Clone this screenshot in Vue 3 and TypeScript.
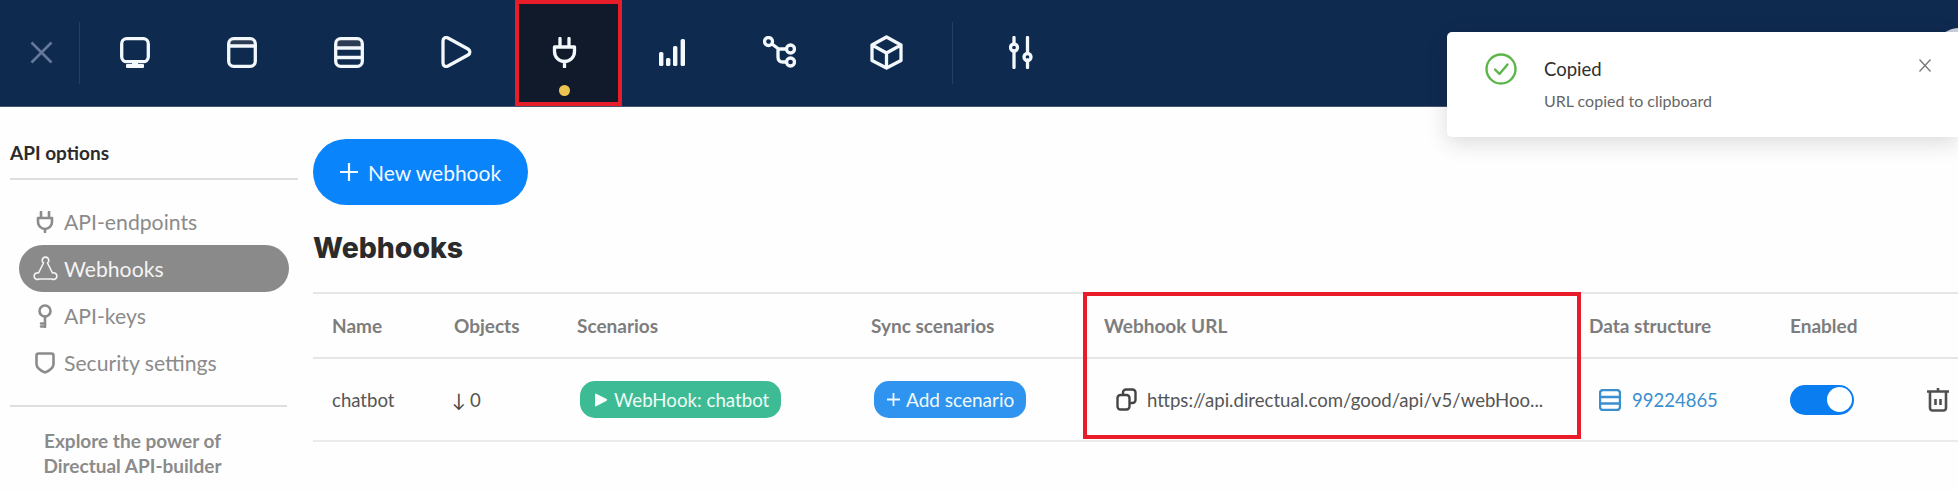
<script setup lang="ts">
const columns: string[] = ['Name', 'Objects', 'Scenarios', 'Sync scenarios', 'Webhook URL', 'Data structure', 'Enabled', '']
</script>

<template>
  <div class="page">
    <header class="topbar">
      <button class="close-btn" aria-label="Close">
        <svg width="23" height="23" viewBox="0 0 23 23"><path d="M1.500 1.500l20 20M21.500 1.500l-20 20" /></svg>
      </button>
      <nav class="tools">
        <div class="tool">
          <svg width="30" height="31" viewBox="0 0 30 31"><rect x="1.700" y="1.700" width="26.600" height="23" rx="5" /><rect class="solid" x="6" y="27" width="18" height="4" rx="1" /><rect class="solid" x="12" y="24" width="6" height="4" /></svg>
        </div>
        <div class="tool">
          <svg width="30" height="31" viewBox="0 0 30 31"><path class="band" d="M2 9V6a4 4 0 0 1 4-4h18a4 4 0 0 1 4 4v3z" /><rect x="1.700" y="1.700" width="26.600" height="27.600" rx="5" /><path d="M2 9h26" /></svg>
        </div>
        <div class="tool">
          <svg width="30" height="31" viewBox="0 0 30 31"><path class="band" d="M2 11V6a4 4 0 0 1 4-4h18a4 4 0 0 1 4 4v5z" /><rect x="1.700" y="1.700" width="26.600" height="27.600" rx="5" /><path d="M2 11h26M2 20.500h26" /></svg>
        </div>
        <div class="tool">
          <svg width="31" height="32" viewBox="0 0 31 32"><path d="M2 5c0-3 2.500-4.200 5-3l20 11c2.500 1.500 2.500 4.500 0 6L7 30c-2.500 1.200-5 0-5-3z" /></svg>
        </div>
        <div class="tool active">
          <svg width="25" height="31" viewBox="0 0 25 31"><path d="M8 1.500V10M17 1.500V10M2.500 10h20v4.500a10 10 0 0 1-20 0zM12.500 24.500V30" /></svg>
          <span class="dot"></span>
        </div>
        <div class="tool">
          <svg width="26" height="27" viewBox="0 0 26 27"><rect class="solid" x="0" y="13" width="4.400" height="14" rx="1.500" /><rect class="solid" x="7" y="19" width="4.400" height="8" rx="1.500" /><rect class="solid" x="14" y="7" width="4.400" height="20" rx="1.500" /><rect class="solid" x="21.600" y="0" width="4.400" height="27" rx="1.500" /></svg>
        </div>
        <div class="tool">
          <svg width="33" height="32" viewBox="0 0 33 32"><circle cx="5.500" cy="5.500" r="4" /><circle cx="27.500" cy="13" r="4" /><circle cx="27.500" cy="26" r="4" /><path d="M9 8l6 4.500V21q0 5 5 5h3.500M15 13h8.500" /></svg>
        </div>
        <div class="tool">
          <svg width="33" height="35" viewBox="0 0 33 35"><path d="M16.500 2L31 10v15.500L16.500 33 2 25.500V10zM2 10l14.500 8L31 10M16.500 18v15" /></svg>
        </div>
        <span class="separator"></span>
        <div class="tool tool-settings">
          <svg width="24" height="33" viewBox="0 0 24 33"><path d="M5 1.500v6.500M5 15v16.500M18.500 1.500V17M18.500 24v7.500" /><circle cx="5" cy="11.500" r="3.500" /><circle cx="18.500" cy="21" r="3.500" /></svg>
        </div>
      </nav>
    </header>

    <div class="content">
      <aside class="sidebar">
        <h3 class="side-title">API options</h3>
        <ul class="side-menu">
          <li class="side-item">
            <span class="side-icon"><svg width="18" height="22" viewBox="0 0 18 22"><path d="M5 1v6M13 1v6M2 7h14v4a7 7 0 0 1-14 0zM9 18v3" /></svg></span>
            API-endpoints
          </li>
          <li class="side-item current">
            <span class="side-icon"><svg width="27" height="27" viewBox="0 0 27 27"><path d="M11.500 8a3.300 3.300 0 1 1 4 0L20.500 18a3.300 3.300 0 1 1-.5 6H7a3.300 3.300 0 1 1-.5-6z" /></svg></span>
            Webhooks
          </li>
          <li class="side-item">
            <span class="side-icon"><svg width="16" height="24" viewBox="0 0 16 24"><circle cx="8" cy="7" r="5.500" /><path d="M8 12.500V23M4 19.500h4M4 22.500h4" /></svg></span>
            API-keys
          </li>
          <li class="side-item">
            <span class="side-icon"><svg width="20" height="22" viewBox="0 0 20 22"><path d="M1.500 3.500q0-2 2-2h13q2 0 2 2V12c0 5-5 7-8.500 8.500C6.500 19 1.500 17 1.500 12z" /></svg></span>
            Security settings
          </li>
        </ul>
        <p class="side-note">Explore the power of<br />Directual API-builder</p>
      </aside>

      <main class="main">
        <button class="new-btn">
          <svg width="18" height="18" viewBox="0 0 18 18"><path d="M9 0v18M0 9h18" /></svg>
          New webhook
        </button>
        <h2 class="heading">Webhooks</h2>

        <section class="table">
          <div class="table-row head">
            <div v-for="c in columns" :key="c" class="cell">{{ c }}</div>
          </div>
          <div class="table-row body-row">
            <div class="cell">chatbot</div>
            <div class="cell objects"><span class="arrow">↓</span>0</div>
            <div class="cell">
              <span class="chip green">
                <svg width="14" height="14" viewBox="0 0 14 14"><path d="M1 1.500q0-1.300 1.200-.8l10.500 5.300q1 .8 0 1.800L2.200 13.300Q1 13.800 1 12.500z" /></svg>
                WebHook: chatbot
              </span>
            </div>
            <div class="cell">
              <span class="chip blue">
                <svg width="13" height="13" viewBox="0 0 13 13"><path d="M6.500 0v13M0 6.500h13" /></svg>
                Add scenario
              </span>
            </div>
            <div class="cell url-cell">
              <svg width="21" height="23" viewBox="0 0 21 23"><rect x="1.500" y="7" width="12" height="14.500" rx="3" /><path d="M7 7V4.500a3 3 0 0 1 3-3h6.500a3 3 0 0 1 3 3V12a3 3 0 0 1-3 3h-3" /></svg>
              <span>https://api.directual.com/good/api/v5/webHoo...</span>
            </div>
            <div class="cell data-cell">
              <svg width="22" height="22" viewBox="0 0 22 22"><rect x="1" y="1" width="20" height="20" rx="3" /><path d="M1 8h20M1 14.500h20" /></svg>
              <span>99224865</span>
            </div>
            <div class="cell">
              <span class="toggle"><span class="knob"></span></span>
            </div>
            <div class="cell trash-cell">
              <svg width="22" height="25" viewBox="0 0 22 25"><path d="M0 4.500h22M11 1v3M3 5v16a2.500 2.500 0 0 0 2.500 2.500h11A2.500 2.500 0 0 0 19 21V5M8.500 12v6M13.500 12v6" /></svg>
            </div>
          </div>
          <div class="url-highlight"></div>
        </section>
      </main>
    </div>

    <span class="avatar-peek"></span>
    <aside class="toast">
      <svg class="toast-check" width="32" height="32" viewBox="0 0 32 32"><circle cx="16" cy="16" r="14.500" /><path d="M10 16.500l4.500 4.500 8-9.500" /></svg>
      <div class="toast-text">
        <div class="toast-title">Copied</div>
        <div class="toast-sub">URL copied to clipboard</div>
      </div>
      <svg class="toast-close" width="12" height="13" viewBox="0 0 12 13"><path d="M.5.500l11 12M11.500.500l-11 12" /></svg>
    </aside>
  </div>
</template>

<style scoped>
.page {
  position: relative;
  width: 1958px;
  height: 491px;
  overflow: hidden;
  background: #fefefe;
  font-family: Lato, "Open Sans", sans-serif;
}

/* top bar */
.topbar {
  display: flex;
  height: 107px;
  box-sizing: border-box;
  background: #0f2a4f;
  border-bottom: 1px solid #46566e;
}
.close-btn {
  width: 80px;
  padding: 0 0 2px 2px;
  border: 0;
  background: none;
  display: flex;
  align-items: center;
  justify-content: center;
}
.close-btn svg {
  fill: none;
  stroke: #64789a;
  stroke-width: 2.600;
}
.tools {
  position: relative;
  display: flex;
  flex: 1;
  border-left: 1px solid transparent;
}
.tools::before {
  content: "";
  position: absolute;
  left: -2px;
  top: 22px;
  height: 62px;
  width: 1px;
  background: #25405f;
}
.tool {
  position: relative;
  width: 107.400px;
  flex: none;
  display: flex;
  align-items: center;
  justify-content: center;
  padding-bottom: 2px;
  box-sizing: border-box;
}
.tool svg {
  fill: none;
  stroke: #f3f8fc;
  stroke-width: 3.300;
  stroke-linecap: round;
  stroke-linejoin: round;
}
.tool svg .solid {
  fill: #f3f8fc;
  stroke: none;
}
.tool svg .band {
  fill: #2c3c55;
  stroke: none;
}
.tool.active {
  background: #101a2b;
  border: 4px solid #e91d2a;
  margin: 0 -4px 0 4px;
  padding-right: 8px;
}
.dot {
  position: absolute;
  left: 50%;
  bottom: 6px;
  width: 11px;
  height: 11px;
  margin-left: -9.500px;
  border-radius: 50%;
  background: #edc451;
}
.separator {
  width: 1px;
  height: 62px;
  margin: 22px 0 0 12px;
  background: #25405f;
  flex: none;
}
.tool-settings {
  width: 135px;
}

/* body */
.content {
  display: flex;
}
.sidebar {
  width: 313px;
  flex: none;
  padding: 33px 0 0 10px;
  box-sizing: border-box;
}
.side-title {
  margin: 0;
  padding-bottom: 13px;
  width: 288px;
  font-size: 19px;
  line-height: 25px;
  font-weight: 700;
  color: #2b2b2b;
  border-bottom: 2px solid #dedede;
}
.side-menu {
  list-style: none;
  margin: 0;
  padding: 18px 0 19px;
  width: 277px;
  border-bottom: 2px solid #dedede;
}
.side-item {
  display: flex;
  align-items: center;
  width: 270px;
  height: 47px;
  margin-left: 9px;
  border-radius: 24px;
  font-size: 21.200px;
  color: #8b8b8b;
  box-sizing: border-box;
}
.side-item.current {
  background: #8a8a8a;
  color: #f4f4f4;
}
.side-icon {
  width: 45px;
  flex: none;
  display: flex;
  justify-content: center;
  padding-left: 7px;
  box-sizing: border-box;
}
.side-icon svg {
  fill: none;
  stroke: #8b8b8b;
  stroke-width: 2.600;
  stroke-linecap: round;
  stroke-linejoin: round;
}
.current .side-icon svg {
  stroke: #f4f4f4;
  stroke-width: 1.600;
}
.side-note {
  margin: 21px 0 0;
  width: 245px;
  text-align: center;
  font-size: 19px;
  line-height: 25px;
  font-weight: 700;
  color: #8b8b8b;
}

.main {
  flex: 1;
  min-width: 0;
  padding-top: 32px;
}
.new-btn {
  display: flex;
  align-items: center;
  gap: 10px;
  height: 66px;
  width: 215px;
  padding: 0 0 0 27px;
  border: 0;
  border-radius: 33px;
  background: #0a84fb;
  color: #f2f9ff;
  font-family: inherit;
  font-size: 21px;
}
.new-btn svg {
  fill: none;
  stroke: #f2f9ff;
  stroke-width: 2.200;
}
.heading {
  margin: 26px 0 27px;
  height: 34px;
  line-height: 34px;
  font-family: Inter, "Open Sans", sans-serif;
  font-size: 28.400px;
  font-weight: 800;
  color: #2b2b2b;
}

/* table */
.table {
  position: relative;
  border-top: 2px solid #e6e6e6;
}
.table-row {
  display: grid;
  grid-template-columns: 122px 123px 294px 233px 485px 201px 129px 1fr;
  align-items: center;
}
.head {
  height: 65px;
  border-bottom: 2px solid #e6e6e6;
  box-sizing: border-box;
  font-size: 19px;
  font-weight: 700;
  color: #7d7d7d;
}
.body-row {
  height: 83px;
  border-bottom: 2px solid #ebebeb;
  box-sizing: border-box;
  font-size: 18.600px;
  color: #555;
}
.cell {
  padding-left: 19px;
  white-space: nowrap;
}
.objects {
  padding-left: 17px;
}
.arrow {
  margin-right: 4px;
  color: #444;
}
.chip {
  display: inline-flex;
  align-items: center;
  height: 37px;
  margin-left: 3px;
  border-radius: 15px;
  color: #f0fbf7;
  box-sizing: border-box;
}
.chip.green {
  width: 201px;
  padding-left: 14px;
  gap: 6px;
  background: #3dbb94;
  font-size: 18.700px;
}
.chip.green svg {
  fill: #f6fffb;
}
.chip.blue {
  width: 152px;
  padding-left: 13px;
  gap: 6px;
  background: #2f93f0;
  font-size: 19px;
}
.chip.blue svg {
  fill: none;
  stroke: #f0f8ff;
  stroke-width: 1.800;
}
.url-cell,
.data-cell {
  display: flex;
  align-items: center;
}
.url-cell {
  padding-left: 31px;
  gap: 10px;
}
.url-cell svg {
  fill: none;
  stroke: #444;
  stroke-width: 2.400;
  flex: none;
}
.data-cell {
  padding-left: 29px;
  gap: 11px;
  color: #3a8fd0;
  font-size: 18.500px;
}
.data-cell svg {
  fill: none;
  stroke: #3a8fd0;
  stroke-width: 2.400;
  flex: none;
}
.toggle {
  display: block;
  position: relative;
  width: 64px;
  height: 30px;
  border-radius: 15px;
  background: #0a7df0;
}
.knob {
  position: absolute;
  right: 2px;
  top: 2.500px;
  width: 25px;
  height: 25px;
  border-radius: 50%;
  background: #fff;
}
.trash-cell {
  padding-left: 27px;
  display: flex;
}
.trash-cell svg {
  fill: none;
  stroke: #505050;
  stroke-width: 2.600;
}
.url-highlight {
  position: absolute;
  left: 770px;
  top: -2px;
  width: 498px;
  height: 147px;
  border: 4.500px solid #e91d2a;
  box-sizing: border-box;
  pointer-events: none;
}

/* toast */
.avatar-peek {
  position: absolute;
  right: -20px;
  top: 28px;
  width: 40px;
  height: 40px;
  border-radius: 50%;
  background: #c9d0dc;
}
.toast {
  position: absolute;
  left: 1447px;
  right: 0;
  top: 32px;
  height: 105px;
  background: #fff;
  border-radius: 5px 0 0 5px;
  box-shadow: 0 6px 22px rgba(0, 0, 0, 0.14);
  display: flex;
  align-items: flex-start;
}
.toast-check {
  margin: 21px 0 0 38px;
  flex: none;
  fill: none;
  stroke: #5cb54a;
  stroke-width: 2.400;
  stroke-linecap: round;
  stroke-linejoin: round;
}
.toast-text {
  margin-left: 27px;
  padding-top: 24px;
  flex: 1;
}
.toast-title {
  font-size: 18.500px;
  line-height: 26px;
  color: #2e2e2e;
}
.toast-sub {
  margin-top: 9px;
  font-size: 16px;
  line-height: 20px;
  color: #666;
}
.toast-close {
  margin: 27px 27px 0 0;
  fill: none;
  stroke: #777;
  stroke-width: 1.300;
  flex: none;
}
</style>
